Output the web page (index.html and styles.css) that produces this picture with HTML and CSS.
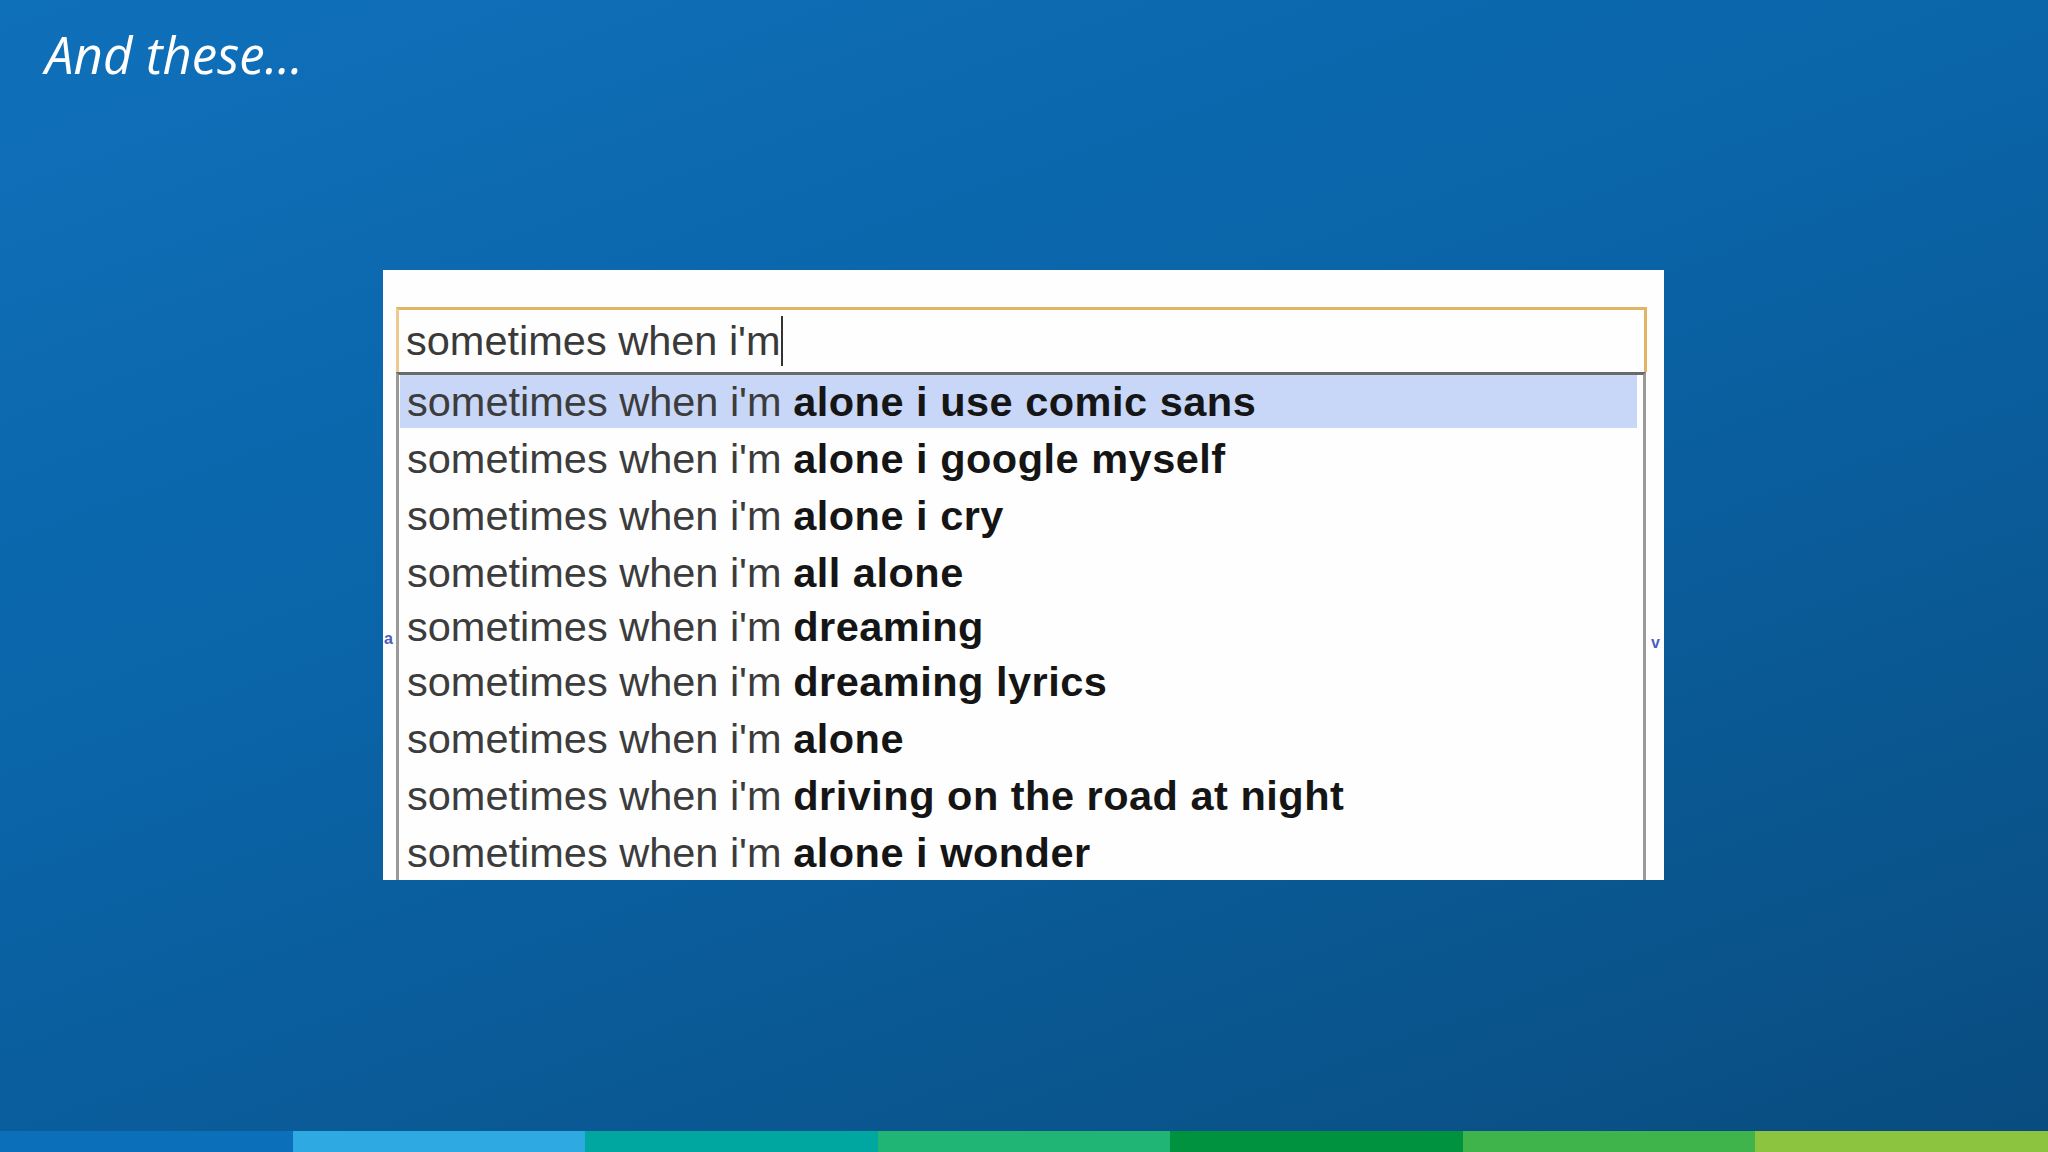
FILE: index.html
```html
<!DOCTYPE html>
<html>
<head>
<meta charset="utf-8">
<link rel="stylesheet" href="styles.css">
</head>
<body>
<div class="slide">
  <h1 class="title">And these...</h1>
  <div class="shot">
    <div class="search">
      <span class="typed">sometimes when i'm</span><span class="caret"></span>
    </div>
    <div class="dropdown">
      <div class="row active">sometimes when i'm <b>alone i use comic sans</b></div>
      <div class="row">sometimes when i'm <b>alone i google myself</b></div>
      <div class="row">sometimes when i'm <b>alone i cry</b></div>
      <div class="row">sometimes when i'm <b>all alone</b></div>
      <div class="row tight">sometimes when i'm <b>dreaming</b></div>
      <div class="row">sometimes when i'm <b>dreaming lyrics</b></div>
      <div class="row">sometimes when i'm <b>alone</b></div>
      <div class="row">sometimes when i'm <b>driving on the road at night</b></div>
      <div class="row">sometimes when i'm <b>alone i wonder</b></div>
    </div>
    <span class="ghost ghost-left">a</span>
    <span class="ghost ghost-right">v</span>
  </div>
  <div class="spacer"></div>
  <div class="bar">
    <span class="seg s1"></span><span class="seg s2"></span><span class="seg s3"></span><span class="seg s4"></span><span class="seg s5"></span><span class="seg s6"></span><span class="seg s7"></span>
  </div>
</div>
</body>
</html>
```

FILE: styles.css
```css
html, body {
  margin: 0;
  padding: 0;
}
body {
  width: 2048px;
  height: 1152px;
  overflow: hidden;
  background: linear-gradient(160deg, #0f70ba 0%, #0a63a6 45%, #0a5791 75%, #094c7f 100%);
}
.slide {
  width: 2048px;
  height: 1152px;
  display: flex;
  flex-direction: column;
}
.title {
  margin: 0;
  padding: 19px 0 0 45px;
  font-family: "Open Sans", sans-serif;
  font-style: italic;
  font-weight: 400;
  font-size: 51px;
  line-height: 71px;
  color: #ffffff;
}
.shot {
  position: relative;
  margin: 180px 0 0 383px;
  width: 1281px;
  height: 610px;
  box-sizing: border-box;
  padding: 37px 17px 0 13px;
  background: #fefefe;
  overflow: hidden;
  font-family: "Liberation Sans", Arial, sans-serif;
  font-size: 41.5px;
}
.search {
  height: 65px;
  box-sizing: border-box;
  border: 3px solid #e2b466;
  border-bottom: none;
  border-left-color: #ecca90;
  padding-left: 7px;
  display: flex;
  align-items: center;
  color: #3a3a3a;
  background: #fffefe;
}
.typed {
  line-height: 62px;
}
.caret {
  display: inline-block;
  width: 2px;
  height: 50px;
  margin-left: 0;
  background: #333;
}
.dropdown {
  border-top: 3px solid #6a6a6a;
  border-left: 3px solid #9a9a9a;
  border-right: 3px solid #9a9a9a;
  margin-right: 1px;
  height: 600px;
}
.row {
  height: 57px;
  line-height: 57px;
  padding-left: 8px;
  margin-right: 6px;
  color: #3c3c3c;
  white-space: nowrap;
}
.row b {
  color: #151515;
  font-weight: 700;
  letter-spacing: 0.5px;
}
.row.active {
  height: 53px;
  line-height: 53px;
  margin-bottom: 2px;
  margin-left: 1px;
  padding-left: 7px;
  background: #c8d6f8;
}
.row.tight {
  height: 52px;
  line-height: 52px;
}
.ghost {
  position: absolute;
  font-family: "Liberation Sans", Arial, sans-serif;
  font-size: 16px;
  font-weight: 700;
  color: #4a5fc0;
}
.ghost-left {
  left: 1px;
  top: 360px;
}
.ghost-right {
  right: 4px;
  top: 364px;
}
.spacer {
  flex: 1;
}
.bar {
  height: 21px;
  display: grid;
  grid-template-columns: repeat(7, 1fr);
}
.s1 { background: #0b6fba; }
.s2 { background: #2ea9e1; }
.s3 { background: #00a7a1; }
.s4 { background: #20b574; }
.s5 { background: #00923f; }
.s6 { background: #3eb44b; }
.s7 { background: #8cc43f; }
```
